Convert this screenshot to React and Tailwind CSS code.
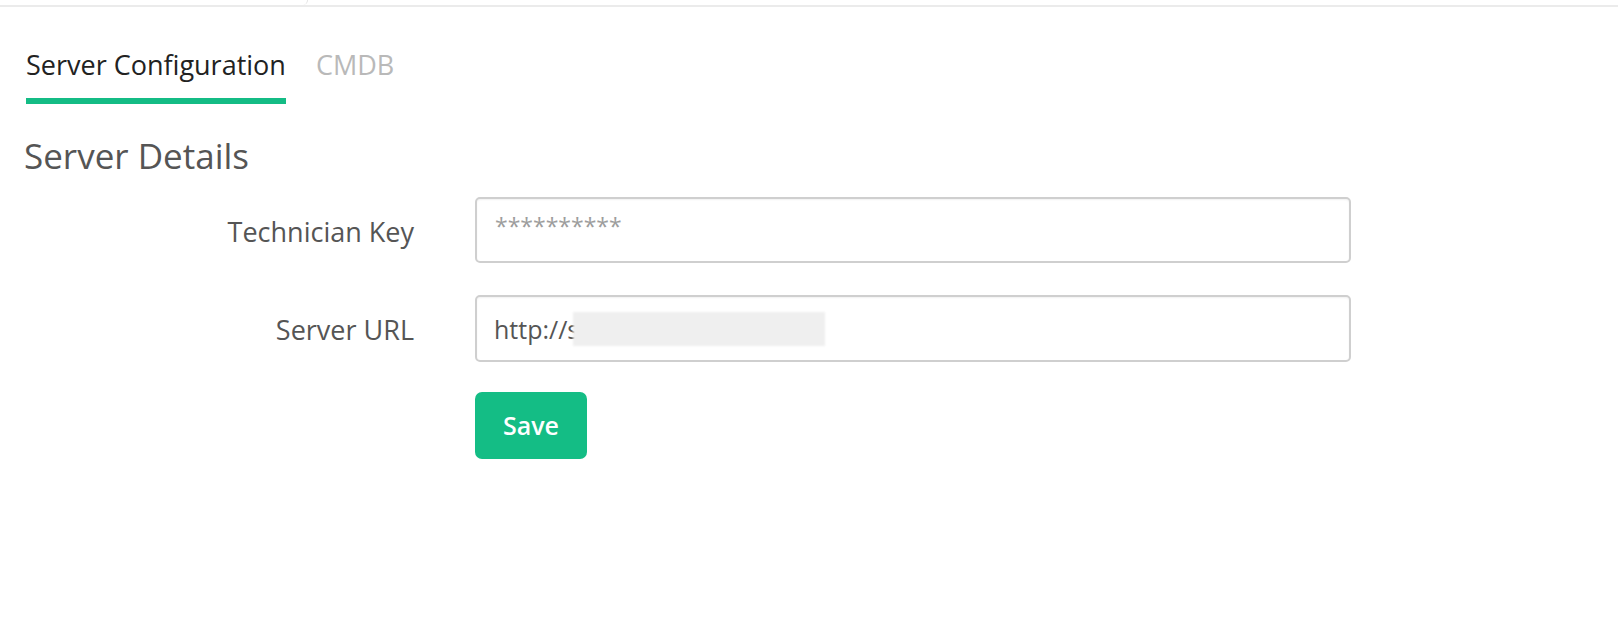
import React from "react";

export default function App() {
  return (
    <div className="min-h-[618px] w-full bg-white font-['Open_Sans','Lato',sans-serif] text-[#555]">
      {/* top strip left over from the page header */}
      <div className="flex h-[7px] border-b-2 border-[#ebebeb]">
        <div className="w-[308px] h-full border-r border-[#e4e4e4] rounded-br-[6px]" />
      </div>

      <div className="pl-[26px]">
        {/* tabs */}
        <div className="flex items-start gap-[30px] pt-[42px]">
          <div className="border-b-[6px] border-[#14bc85] pb-[17px] text-[27px] leading-[32px] text-[#222]">
            Server Configuration
          </div>
          <div className="text-[27px] leading-[32px] text-[#b9b9b9]">CMDB</div>
        </div>

        {/* section */}
        <h2 className="mt-[32px] -ml-[2px] text-[35px] leading-[40px] text-[#555]">Server Details</h2>

        <div className="mt-[21px] grid grid-cols-[388px_876px] gap-x-[61px] items-center">
          <label className="pt-[3px] text-right text-[27px] leading-[30px] text-[#555]">Technician Key</label>
          <div className="flex h-[66px] items-center rounded-[5px] border-2 border-[#cfcfcf] px-[18px] shadow-[inset_0_1px_2px_rgba(0,0,0,0.06)]">
            <span className="-mt-[8px] text-[23px] leading-[30px] text-[#9d9d9d]">**********</span>
          </div>

          <label className="mt-[32px] pt-[3px] text-right text-[27px] leading-[30px] text-[#555]">Server URL</label>
          <div className="mt-[32px] flex h-[67px] items-center rounded-[5px] border-2 border-[#cfcfcf] px-[17px] shadow-[inset_0_1px_2px_rgba(0,0,0,0.06)]">
            <span className="text-[25px] leading-[30px] text-[#555]">http://s</span>
            <span className="-ml-[6px] h-[34px] w-[252px] bg-[#efefef] blur-[1px]" />
          </div>

          <div />
          <div className="mt-[30px]">
            <button className="h-[67px] w-[112px] rounded-[7px] bg-[#14bd85] text-[25px] font-semibold text-white">
              Save
            </button>
          </div>
        </div>
      </div>
    </div>
  );
}
